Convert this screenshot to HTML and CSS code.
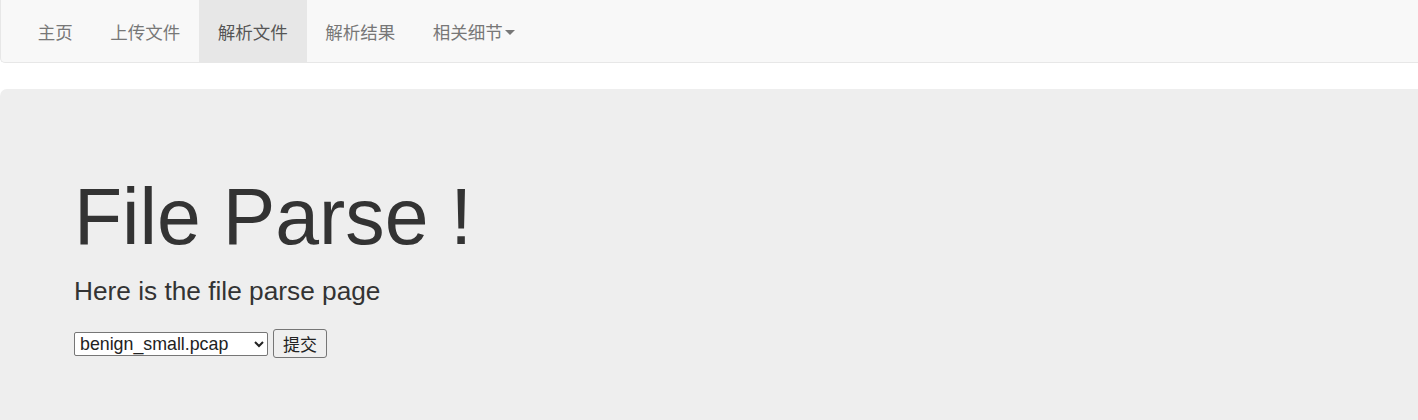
FILE: index.html
```html
<!DOCTYPE html>
<html lang="zh-CN">
<head>
<meta charset="utf-8">
<title>File Parse</title>
<link rel="stylesheet" href="styles.css">
</head>
<body>
<nav class="navbar">
  <ul class="nav">
    <li><a href="#">主页</a></li>
    <li><a href="#">上传文件</a></li>
    <li class="active"><a href="#">解析文件</a></li>
    <li><a href="#">解析结果</a></li>
    <li><a href="#">相关细节<span class="caret"></span></a></li>
  </ul>
</nav>
<div class="jumbotron">
  <h1>File Parse !</h1>
  <p class="lead">Here is the file parse page</p>
  <form class="parse-form">
    <select class="file-select">
      <option>benign_small.pcap</option>
    </select>
    <button type="button" class="submit-btn">提交</button>
  </form>
</div>
</body>
</html>
```
FILE: styles.css
```css
html, body {
  margin: 0;
  padding: 0;
  overflow: hidden;
  background: #fff;
}
body {
  font-family: "Liberation Sans", Arial, "Noto Sans CJK SC", sans-serif;
  font-size: 17.5px;
  color: #333;
  line-height: 1.42857;
}
.navbar {
  background: #f8f8f8;
  border-bottom: 1px solid #e7e7e7;
  border-left: 1px solid #e7e7e7;
  border-bottom-left-radius: 5px;
  height: 62px;
  margin-bottom: 26px;
  padding-left: 18px;
}
.nav {
  list-style: none;
  margin: 0;
  padding: 0;
  display: flex;
  height: 100%;
}
.nav li a {
  display: flex;
  align-items: center;
  height: 62px;
  box-sizing: border-box;
  padding: 0 18.75px;
  color: #777;
  text-decoration: none;
  font-family: "Noto Sans CJK SC", sans-serif;
  font-size: 17.5px;
  line-height: 25px;
}
.nav li.active a {
  background: #e7e7e7;
  color: #555;
}
.caret {
  display: inline-block;
  width: 0;
  height: 0;
  margin-left: 2px;
  margin-top: 2px;
  border-top: 5px solid #777;
  border-left: 5px solid transparent;
  border-right: 5px solid transparent;
}
.jumbotron {
  background: #eee;
  border-top-left-radius: 7px;
  padding: 60px 74px 70px 74px;
}
.jumbotron h1 {
  margin: 25px 0 12.5px 0;
  font-size: 78.75px;
  line-height: 1.1;
  font-weight: 500;
  color: #333;
}
.lead {
  margin: 0 0 18.75px 0;
  font-size: 26.25px;
  line-height: 37.5px;
  font-weight: 300;
}
.parse-form {
  display: flex;
  align-items: center;
  gap: 5px;
  margin-top: 0;
}
.file-select {
  width: 194px;
  height: 24px;
  font-family: "Liberation Sans", Arial, sans-serif;
  font-size: 17.8px;
  color: #222;
  background: #fff;
  border: 1px solid #767676;
  border-radius: 2px;
  padding: 0 0 0 1px;
  margin-top: 1px;
}
.submit-btn {
  width: 54px;
  height: 29px;
  font-family: "Noto Sans CJK SC", sans-serif;
  font-size: 17px;
  line-height: 1;
  color: #222;
  background: #efefef;
  border: 1px solid #767676;
  border-radius: 3px;
  padding: 0;
}
```
